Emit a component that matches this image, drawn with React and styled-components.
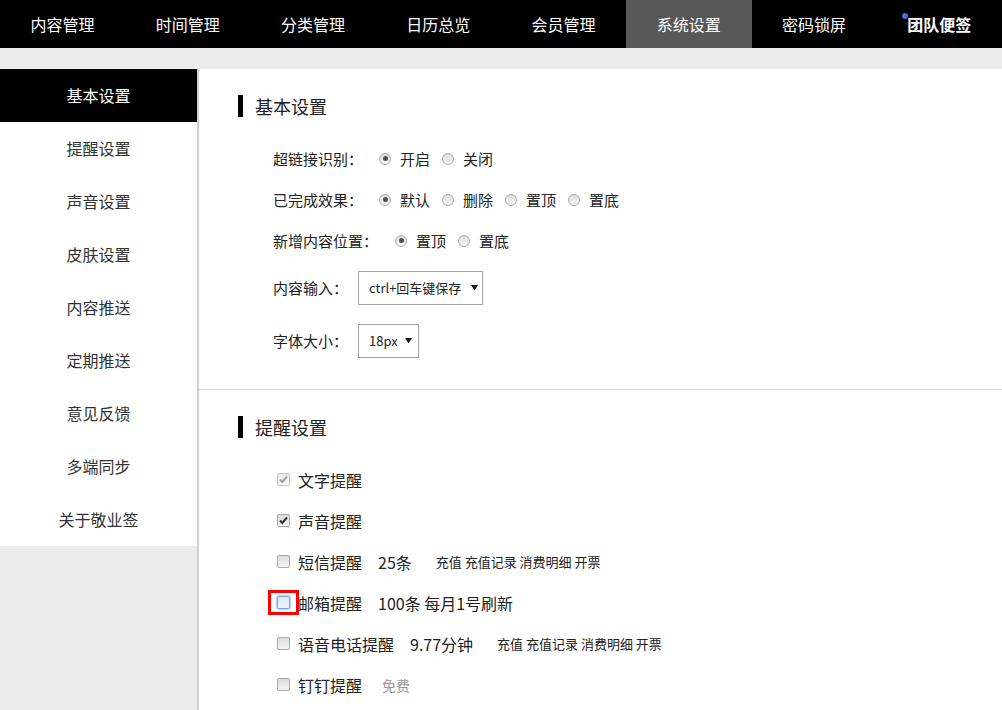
import React from "react";
import styled, { createGlobalStyle, css } from "styled-components";

const Global = createGlobalStyle`
  html, body { margin: 0; padding: 0; height: 710px; overflow: hidden; }
  body {
    background: #ebebeb;
    font-family: "Noto Sans CJK SC", "Noto Sans", "Liberation Sans", sans-serif;
    color: #222;
  }
  * { box-sizing: border-box; }
`;

const Nav = styled.nav`
  display: grid;
  grid-template-columns: repeat(8, 1fr);
  height: 48px;
  background: #000;
`;

const NavItem = styled.div`
  position: relative;
  height: 48px;
  line-height: 48px;
  text-align: center;
  font-size: 16px;
  color: #fff;
  background: ${(p) => (p.$active ? "#585858" : "transparent")};
  font-weight: ${(p) => (p.$bold ? 700 : 400)};
`;

const NavLabel = styled.span`
  position: relative;
`;

const Dot = styled.span`
  position: absolute;
  left: -5px;
  top: 1px;
  width: 6px;
  height: 6px;
  border-radius: 50%;
  background: #4b6bd8;
`;

const Body = styled.div`
  display: flex;
  padding-top: 21px;
  height: calc(710px - 48px);
`;

const Sidebar = styled.aside`
  width: 197px;
  flex: none;
  align-self: flex-start;
  background: #fff;
`;

const SideItem = styled.div`
  height: 53px;
  line-height: 53px;
  text-align: center;
  font-size: 16px;
  color: ${(p) => (p.$active ? "#fff" : "#333")};
  background: ${(p) => (p.$active ? "#000" : "#fff")};
`;

const Main = styled.main`
  flex: 1;
  background: #fff;
  border-left: 2px solid #d0d0d0;
  overflow: hidden;
`;

const Section = styled.section`
  padding: ${(p) => p.$pt}px 0 ${(p) => p.$pb}px 0;
  border-bottom: ${(p) => (p.$divider ? "1px solid #d4d4d4" : "none")};
`;

const Title = styled.h2`
  display: flex;
  align-items: center;
  margin: 0;
  padding-left: 39px;
  height: 24px;
  font-size: 18px;
  font-weight: 400;
  color: #222;
  &::before {
    content: "";
    width: 5px;
    height: 22px;
    background: #000;
    margin-right: 12px;
  }
`;

const Rows = styled.div`
  margin-top: ${(p) => p.$mt || 20}px;
  padding-left: 74px;
`;

const Row = styled.div`
  display: flex;
  align-items: center;
  height: ${(p) => p.$h || 41}px;
  font-size: ${(p) => p.$fs || 15}px;
  color: #222;
  white-space: nowrap;
`;

const Label = styled.span`
  margin-right: ${(p) => p.$mr}px;
`;

const RadioBox = styled.span`
  position: relative;
  width: 12px;
  height: 12px;
  border-radius: 50%;
  border: 1px solid #ababab;
  background: linear-gradient(#dcdcdc, #f7f7f7);
  margin-right: 9px;
  flex: none;
  ${(p) =>
    p.$checked &&
    css`
      &::after {
        content: "";
        position: absolute;
        left: 2.5px;
        top: 2.5px;
        width: 5px;
        height: 5px;
        border-radius: 50%;
        background: #505050;
      }
    `}
`;

const RadioText = styled.span`
  margin-right: 12px;
`;

const Radio = ({ checked, children }) => (
  <>
    <RadioBox $checked={checked} />
    <RadioText>{children}</RadioText>
  </>
);

const SelectBox = styled.div`
  display: flex;
  align-items: center;
  justify-content: space-between;
  width: ${(p) => p.$w}px;
  height: 34px;
  border: 1px solid #a6a6a6;
  background: #fff;
  padding: 0 ${(p) => p.$pr}px 0 10px;
  font-size: ${(p) => p.$fs}px;
  color: #222;
`;

const Arrow = () => (
  <svg width="7" height="7" viewBox="0 0 7 7">
    <path d="M0 1 L7 1 L3.5 6.5 Z" fill="#111" />
  </svg>
);

const CheckWrap = styled.span`
  position: relative;
  width: 13px;
  height: 13px;
  margin-left: 4px;
  margin-right: 8px;
  flex: none;
  border-radius: 2px;
  border: 1px solid ${(p) => (p.$focus ? "#80a8e8" : p.$disabled ? "#c4c4c4" : "#a9a9a9")};
  background: ${(p) =>
    p.$focus
      ? "linear-gradient(#dfe8f6, #f1f5fb)"
      : p.$disabled
      ? "linear-gradient(#ececec, #f8f8f8)"
      : "linear-gradient(#dcdcdc, #f4f4f4)"};
  box-shadow: ${(p) => (p.$focus ? "0 0 0 1px #b9d0f2" : "none")};
  display: flex;
  align-items: center;
  justify-content: center;
`;

const RedMark = styled.span`
  position: absolute;
  left: -10px;
  top: -7px;
  width: 31px;
  height: 25px;
  border: 3px solid #f00;
`;

const Check = ({ checked, disabled, focus }) => (
  <CheckWrap $disabled={disabled} $focus={focus}>
    {checked && (
      <svg width="11" height="11" viewBox="0 0 11 11">
        <path
          d="M2 5.5 L4.3 8 L9 2.5"
          fill="none"
          stroke={disabled ? "#a0a0a0" : "#333"}
          strokeWidth="2"
        />
      </svg>
    )}
    {focus && <RedMark />}
  </CheckWrap>
);

const Extra = styled.span`
  margin-left: ${(p) => p.$ml}px;
  font-size: ${(p) => p.$fs || 16}px;
  color: ${(p) => p.$color || "#222"};
`;

const navItems = ["内容管理", "时间管理", "分类管理", "日历总览", "会员管理", "系统设置", "密码锁屏", "团队便签"];
const sideItems = ["基本设置", "提醒设置", "声音设置", "皮肤设置", "内容推送", "定期推送", "意见反馈", "多端同步", "关于敬业签"];

export default function App() {
  return (
    <>
      <Global />
      <Nav>
        {navItems.map((t, i) => (
          <NavItem key={t} $active={i === 5} $bold={i === 7}>
            <NavLabel>
              {i === 7 && <Dot />}
              {t}
            </NavLabel>
          </NavItem>
        ))}
      </Nav>
      <Body>
        <Sidebar>
          {sideItems.map((t, i) => (
            <SideItem key={t} $active={i === 0}>
              {t}
            </SideItem>
          ))}
        </Sidebar>
        <Main>
          <Section $pt={25} $pb={22} $divider>
            <Title>基本设置</Title>
            <Rows>
              <Row>
                <Label $mr={16}>超链接识别：</Label>
                <Radio checked>开启</Radio>
                <Radio>关闭</Radio>
              </Row>
              <Row>
                <Label $mr={16}>已完成效果：</Label>
                <Radio checked>默认</Radio>
                <Radio>删除</Radio>
                <Radio>置顶</Radio>
                <Radio>置底</Radio>
              </Row>
              <Row>
                <Label $mr={17}>新增内容位置：</Label>
                <Radio checked>置顶</Radio>
                <Radio>置底</Radio>
              </Row>
              <Row $h={53}>
                <Label $mr={10}>内容输入：</Label>
                <SelectBox $w={125} $fs={13} $pr={4}>
                  <span>ctrl+回车键保存</span>
                  <Arrow />
                </SelectBox>
              </Row>
              <Row $h={53}>
                <Label $mr={10}>字体大小：</Label>
                <SelectBox $w={61} $fs={13} $pr={6}>
                  <span>18px</span>
                  <Arrow />
                </SelectBox>
              </Row>
            </Rows>
          </Section>
          <Section $pt={25} $pb={0}>
            <Title>提醒设置</Title>
            <Rows $mt={20}>
              <Row $fs={16}>
                <Check checked disabled />
                文字提醒
              </Row>
              <Row $fs={16}>
                <Check checked />
                声音提醒
              </Row>
              <Row $fs={16}>
                <Check />
                短信提醒
                <Extra $ml={16}>25条</Extra>
                <Extra $ml={24} $fs={13}>充值 充值记录 消费明细 开票</Extra>
              </Row>
              <Row $fs={16}>
                <Check focus />
                邮箱提醒
                <Extra $ml={16}>100条 每月1号刷新</Extra>
              </Row>
              <Row $fs={16}>
                <Check />
                语音电话提醒
                <Extra $ml={16}>9.77分钟</Extra>
                <Extra $ml={24} $fs={13}>充值 充值记录 消费明细 开票</Extra>
              </Row>
              <Row $fs={16}>
                <Check />
                钉钉提醒
                <Extra $ml={20} $fs={14} $color="#999">免费</Extra>
              </Row>
            </Rows>
          </Section>
        </Main>
      </Body>
    </>
  );
}
